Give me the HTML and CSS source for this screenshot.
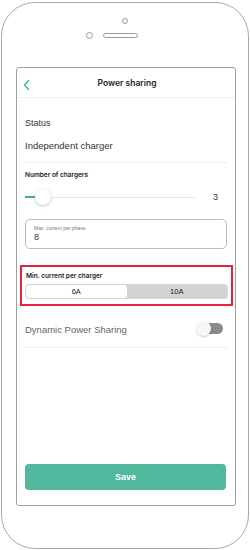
FILE: index.html
```html
<!DOCTYPE html>
<html lang="en">
<head>
    <meta charset="UTF-8">
    <title>Power sharing</title>
    <link rel="stylesheet" href="styles.css">
</head>
<body>
    <div class="phone">
        <div class="phone-top">
            <span class="camera"></span>
            <div class="speaker-row">
                <span class="sensor"></span>
                <span class="speaker"></span>
            </div>
        </div>

        <div class="screen">
            <div class="header">
                <svg class="back" width="8" height="12" viewBox="0 0 8 12">
                    <path d="M6 1 L1.5 6 L6 11" fill="none" stroke="#3fb08f" stroke-width="1.3"/>
                </svg>
                <span class="title">Power sharing</span>
            </div>

            <div class="content">
                <div class="status-label">Status</div>
                <div class="status-value">Independent charger</div>

                <div class="section-label">Number of chargers</div>
                <div class="slider-row">
                    <div class="slider">
                        <div class="slider-fill"></div>
                        <div class="slider-thumb"></div>
                    </div>
                    <span class="slider-value">3</span>
                </div>

                <div class="field">
                    <div class="field-label">Max. current per phase</div>
                    <div class="field-value">8</div>
                </div>

                <div class="highlight">
                    <div class="section-label">Min. current per charger</div>
                    <div class="segmented">
                        <div class="segment active">6A</div>
                        <div class="segment">10A</div>
                    </div>
                </div>

                <div class="toggle-row">
                    <span>Dynamic Power Sharing</span>
                    <div class="toggle"><span class="knob"></span></div>
                </div>
            </div>

            <button class="save">Save</button>
        </div>
    </div>
</body>
</html>
```

FILE: styles.css
```css
body {
    margin: 0;
    background: #fff;
    font-family: "Liberation Sans", Arial, sans-serif;
    color: #222;
}

.phone {
    margin: 2px 1px 1px 1px;
    width: 246px;
    height: 545px;
    border: 1px solid #a8a8a8;
    border-radius: 34px;
    display: flex;
    flex-direction: column;
}

.phone-top {
    height: 64px;
    display: flex;
    flex-direction: column;
    align-items: center;
}

.camera {
    margin-top: 15px;
    width: 4px;
    height: 4px;
    border: 1px solid #999;
    border-radius: 50%;
}

.speaker-row {
    margin-top: 8px;
    margin-left: -26px;
    display: flex;
    align-items: center;
    gap: 10px;
}

.sensor {
    width: 5px;
    height: 5px;
    border: 1px solid #999;
    border-radius: 50%;
}

.speaker {
    width: 33px;
    height: 3px;
    border: 1px solid #999;
    border-radius: 3px;
}

.screen {
    margin-left: 14px;
    width: 218px;
    height: 437px;
    border: 1px solid #a0a0a0;
    border-radius: 3px;
    display: flex;
    flex-direction: column;
}

.header {
    height: 29px;
    border-bottom: 1px solid #f0f0f0;
    display: flex;
    align-items: center;
    justify-content: center;
    position: relative;
}

.back {
    position: absolute;
    left: 6px;
    top: 11px;
}

.title {
    font-family: Inter, "Liberation Sans", sans-serif;
    font-size: 8.5px;
    font-weight: 600;
    color: #222;
    margin-left: 2px;
}

.content {
    padding: 0 8px;
    flex: 1;
}

.status-label {
    margin-top: 19px;
    font-size: 9px;
    line-height: 12px;
    color: #333;
}

.status-value {
    margin-top: 11px;
    font-size: 9.5px;
    line-height: 12px;
    color: #333;
    padding-bottom: 10px;
    border-bottom: 1px solid #eee;
}

.section-label {
    margin-top: 7px;
    font-family: Inter, "Liberation Sans", sans-serif;
    font-size: 6.5px;
    font-weight: 600;
    line-height: 10px;
    color: #222;
}

.slider-row {
    margin-top: 8px;
    height: 18px;
    display: flex;
    align-items: center;
}

.slider {
    width: 170px;
    height: 1px;
    background: #e6e6e6;
    position: relative;
}

.slider-fill {
    width: 16px;
    height: 2px;
    margin-top: -0.5px;
    background: #3fb08f;
}

.slider-thumb {
    position: absolute;
    left: 10px;
    top: -8px;
    width: 16px;
    height: 16px;
    border-radius: 50%;
    background: #fff;
    box-shadow: 0 1px 3px rgba(0, 0, 0, 0.25);
}

.slider-value {
    margin-left: 18px;
    font-size: 9px;
    color: #333;
}

.field {
    box-sizing: border-box;
    margin-top: 13px;
    height: 30px;
    border: 1px solid #bbb;
    border-radius: 5px;
    padding: 5px 8px 0 8px;
}

.field-label {
    font-size: 5px;
    line-height: 7px;
    color: #777;
}

.field-value {
    font-size: 9px;
    line-height: 11px;
    color: #333;
}

.highlight {
    margin: 16px -6px 0 -5px;
    border: 2px solid #e8213f;
    padding: 0 3px 5px 3px;
}

.highlight .section-label {
    margin-top: 4px;
    margin-left: 1px;
}

.segmented {
    margin-top: 3px;
    height: 15px;
    background: #d4d4d4;
    border-radius: 4px;
    display: flex;
    padding: 0 1px;
    align-items: center;
}

.segment {
    flex: 1;
    height: 13px;
    font-size: 7.5px;
    line-height: 13px;
    text-align: center;
    color: #222;
}

.segment.active {
    background: #fff;
    border-radius: 3px;
}

.toggle-row {
    box-sizing: border-box;
    margin-top: 18px;
    height: 24px;
    border-bottom: 1px solid #eee;
    display: flex;
    justify-content: space-between;
    font-size: 9.5px;
    color: #666;
    padding-right: 4px;
}

.toggle {
    margin-top: -1px;
    width: 22px;
    height: 11px;
    border-radius: 6px;
    background: #8a8a8a;
    position: relative;
}

.knob {
    position: absolute;
    left: -5px;
    top: -2px;
    width: 15px;
    height: 15px;
    border-radius: 50%;
    background: #f7f7f7;
    box-shadow: 0 1px 2px rgba(0, 0, 0, 0.2);
}

.save {
    margin: 0 9px 15px 8px;
    height: 26px;
    border: none;
    border-radius: 4px;
    background: #52b89d;
    color: #fff;
    font-family: "Liberation Sans", Arial, sans-serif;
    font-size: 9px;
    font-weight: bold;
}
```
